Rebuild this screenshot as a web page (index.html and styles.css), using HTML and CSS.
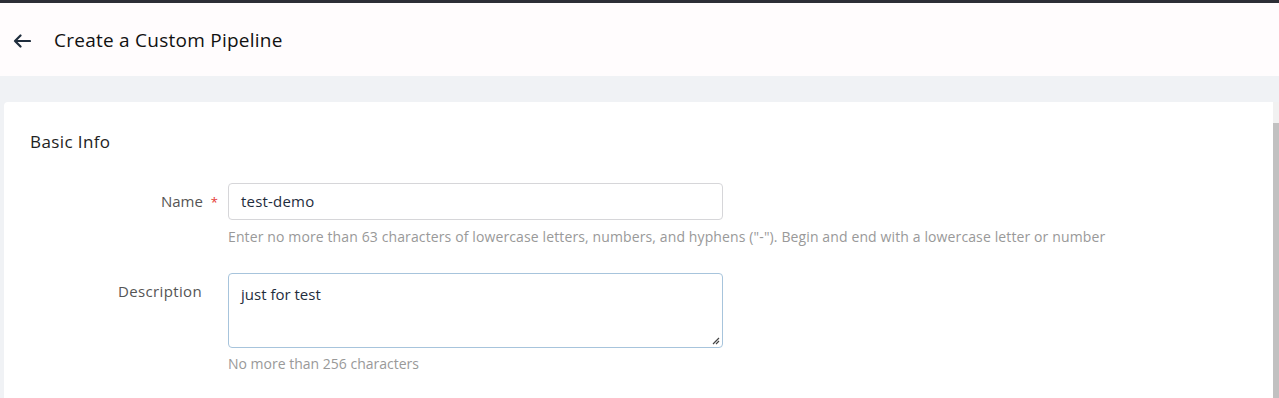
FILE: index.html
```html
<!DOCTYPE html>
<html>
<head>
<meta charset="utf-8">
<link rel="stylesheet" href="styles.css">
</head>
<body>
<div class="topbar"></div>
<header class="header">
  <span class="back">
    <svg width="18" height="14" viewBox="0 0 18 14"><path d="M17 7H2M7.5 1.5L2 7l5.5 5.5" fill="none" stroke="#1f2d3d" stroke-width="2.2" stroke-linecap="round" stroke-linejoin="round"/></svg>
  </span>
  <h1 class="title">Create a Custom Pipeline</h1>
</header>
<main class="content">
  <section class="card">
    <h2 class="section-title">Basic Info</h2>
    <div class="form-row">
      <label class="label">Name <span class="req">*</span></label>
      <div class="field">
        <div class="input">test-demo</div>
        <div class="help">Enter no more than 63 characters of lowercase letters, numbers, and hyphens ("-"). Begin and end with a lowercase letter or number</div>
      </div>
    </div>
    <div class="form-row row-desc">
      <label class="label label-desc">Description</label>
      <div class="field">
        <div class="textarea">just for test
          <svg class="grip" width="9" height="9" viewBox="0 0 9 9"><path d="M8 2L2 8M8 5L5 8" stroke="#444" stroke-width="1.2"/></svg>
        </div>
        <div class="help help-desc">No more than 256 characters</div>
      </div>
    </div>
  </section>
  <div class="scrollbar"><div class="thumb"></div></div>
</main>
</body>
</html>
```

FILE: styles.css
```css
* { box-sizing: border-box; }
html, body { margin: 0; padding: 0; }
body {
  font-family: "Open Sans", "Noto Sans", sans-serif;
  background: #f0f2f5;
  width: 1279px;
  height: 398px;
  overflow: hidden;
  color: #333;
}
.topbar { height: 3px; background: #2d2f36; }
.header {
  height: 73px;
  background: #fffcfd;
  display: flex;
  align-items: center;
  padding-left: 13px;
}
.back { display: flex; width: 18px; height: 14px; margin-top: 2px; }
.title {
  margin: 0 0 0 23px;
  font-size: 19px;
  font-weight: 400;
  letter-spacing: 0.25px;
  color: #111;
}
.content {
  display: flex;
  padding: 26px 0 0 4px;
  height: 325px;
}
.card {
  flex: 1;
  background: #fff;
  border-radius: 4px 0 0 0;
  padding: 28px 26px 0 26px;
}
.scrollbar {
  width: 6px;
  background: #f1f1f1;
  padding-top: 21px;
  display: flex;
  justify-content: flex-end;
}
.thumb { width: 4px; flex: 1; background: #c1c1c1; }
.section-title {
  margin: 0;
  font-size: 17px;
  font-weight: 400;
  letter-spacing: 0.4px;
  color: #222;
  line-height: 24px;
}
.form-row { display: flex; margin-top: 29px; }
.row-desc { margin-top: 26px; }
.label {
  width: 190px;
  text-align: right;
  font-size: 15px;
  color: #555;
  line-height: 36px;
  padding-right: 2px;
}
.label-desc { padding-right: 18px; letter-spacing: 0.35px; }
.req { color: #e53935; font-size: 13px; margin-left: 4px; }
.field { margin-left: 8px; }
.input {
  width: 495px;
  height: 37px;
  border: 1px solid #d6d6d9;
  border-radius: 4px;
  padding: 0 12px;
  line-height: 35px;
  font-size: 15px;
  letter-spacing: 0.2px;
  color: #1f2d3d;
}
.help {
  font-size: 14px;
  color: #999;
  margin-top: 7px;
  line-height: 20px;
  letter-spacing: 0.12px;
  white-space: nowrap;
}
.help-desc { margin-top: 6px; letter-spacing: 0; }
.textarea {
  position: relative;
  width: 495px;
  height: 75px;
  border: 1px solid #a7c4dc;
  border-radius: 4px;
  padding: 10px 12px 6px;
  font-size: 15px;
  color: #1f2d3d;
  line-height: 20px;
}
.grip { position: absolute; right: 2px; bottom: 2px; }
```
